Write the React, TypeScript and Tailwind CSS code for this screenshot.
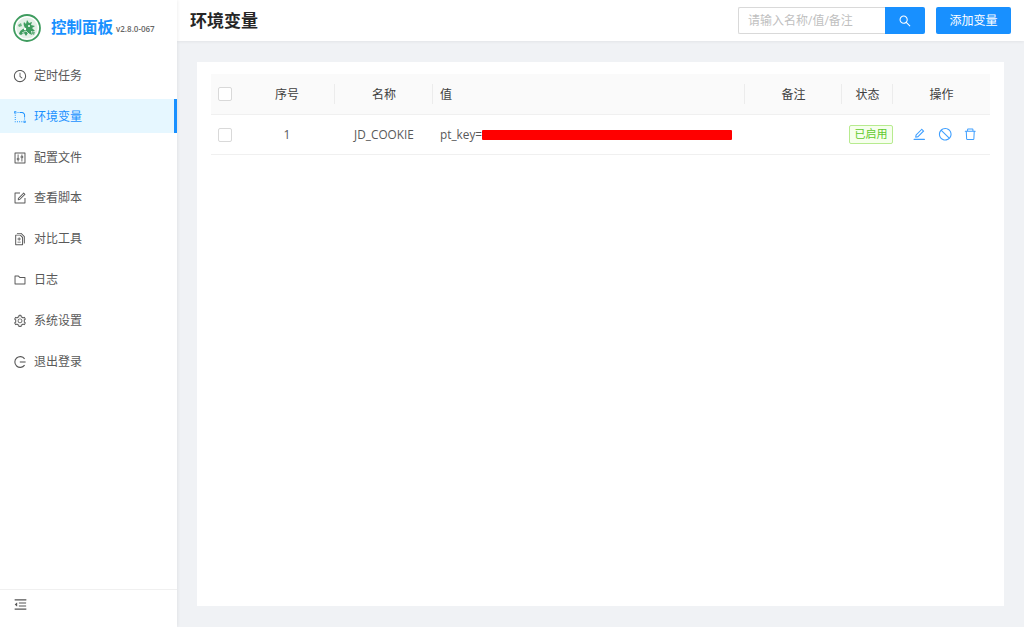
import {
  AiOutlineClockCircle,
  AiOutlineRadiusSetting,
  AiOutlineControl,
  AiOutlineForm,
  AiOutlineDiff,
  AiOutlineFolder,
  AiOutlineSetting,
  AiOutlineEdit,
  AiOutlineStop,
  AiOutlineDelete,
  AiOutlineSearch,
  AiOutlineMenuFold,
} from "react-icons/ai";

const font = "font-['Open_Sans','Noto_Sans_CJK_SC',sans-serif]";

const LogoutIcon = () => (
  <svg width="14" height="14" viewBox="0 0 14 14" fill="none" stroke="currentColor" strokeWidth="1.1">
    <path d="M11.6 3.8A5.4 5.4 0 1 0 11.6 10.2" />
    <path d="M6.8 7H12.6" />
  </svg>
);

const Logo = () => (
  <svg width="28" height="28" viewBox="0 0 28 28" fill="none">
    <circle cx="14" cy="14" r="13" stroke="#3f9c5f" strokeWidth="1.8" />
    <circle cx="14" cy="14" r="10.6" fill="#e4f0e7" />
    <path
      d="M6 20c1-4 4-5 6-6-1-2-2-4-1-6l2 2 1-4 2 3 3-1-1 3 4 1-3 2 3 3-4 0 1 4-4-2-2 3-2-3-3 2z"
      fill="#3f9c5f"
    />
    <path d="M5 11l3-2 1 3-3 1zM19 17l3 1-1 3-2-1z" fill="#6cb584" />
    <circle cx="12" cy="15" r="1.2" fill="#fff" />
    <circle cx="16" cy="12" r="1" fill="#fff" />
    <path d="M9 19l4-2 3 3" stroke="#fff" strokeWidth="0.7" />
  </svg>
);

const menu = [
  { label: "定时任务", icon: <AiOutlineClockCircle size={14} /> },
  { label: "环境变量", icon: <AiOutlineRadiusSetting size={14} />, active: true },
  { label: "配置文件", icon: <AiOutlineControl size={14} /> },
  { label: "查看脚本", icon: <AiOutlineForm size={14} /> },
  { label: "对比工具", icon: <AiOutlineDiff size={14} /> },
  { label: "日志", icon: <AiOutlineFolder size={14} /> },
  { label: "系统设置", icon: <AiOutlineSetting size={14} /> },
  { label: "退出登录", icon: <LogoutIcon /> },
];

const grid = "grid grid-cols-[28px_96px_98px_312px_97px_51px_97px]";

const Checkbox = () => (
  <span className="block h-[14px] w-[14px] rounded-[2px] border border-[#d9d9d9] bg-white" />
);

const HeadCell = ({ children, left }: { children?: React.ReactNode; left?: boolean }) => (
  <div className={`flex h-[40px] items-center pt-[2px] ${left ? "justify-start pl-[7px]" : "justify-center"}`}>
    {children}
  </div>
);

const Sep = () => <span className="absolute right-0 top-[10px] h-[20px] w-px bg-[#ececec]" />;

export default function App() {
  return (
    <div className={`flex h-[627px] w-[1024px] overflow-hidden bg-[#f0f2f5] ${font} text-[12px] text-[#595959]`}>
      <aside className="z-10 flex w-[177px] shrink-0 flex-col bg-white shadow-[1px_0_3px_rgba(0,0,0,0.06)]">
        <div className="flex h-[55px] items-center pl-[13px]">
          <Logo />
          <span className="ml-[10px] text-[15.5px] font-semibold text-[#1890ff]">控制面板</span>
          <span className="ml-[3px] mt-[3px] text-[8px] font-semibold text-[#666]">v2.8.0-067</span>
        </div>
        <nav className="flex flex-col gap-[6.8px] pt-[3px]">
          {menu.map((item) => (
            <div
              key={item.label}
              className={`flex h-[34px] items-center gap-[7px] pl-[13px] pt-[2px] ${
                item.active ? "border-r-[3px] border-[#1890ff] bg-[#e6f7ff] text-[#1890ff]" : ""
              }`}
            >
              {item.icon}
              <span>{item.label}</span>
            </div>
          ))}
        </nav>
        <div className="mt-auto flex h-[38px] items-start border-t border-[#f0f0f0] pl-[13px] pt-[7px] text-[#555]">
          <AiOutlineMenuFold size={15} />
        </div>
      </aside>

      <main className="flex min-w-0 flex-1 flex-col">
        <header className="flex h-[41px] items-center justify-between bg-white pl-[13px] pr-[13px] shadow-[0_1px_3px_rgba(0,0,0,0.06)]">
          <h1 className="text-[17px] font-semibold text-[#262626]">环境变量</h1>
          <div className="flex items-center gap-[11px]">
            <div className="flex h-[27px]">
              <div className="flex w-[147px] items-center rounded-l-[2px] border border-r-0 border-[#d9d9d9] bg-white pl-[9px] text-[#bfbfbf]">
                请输入名称/值/备注
              </div>
              <div className="flex w-[40px] items-center justify-center rounded-r-[2px] bg-[#1890ff] text-white">
                <AiOutlineSearch size={14} />
              </div>
            </div>
            <button className="flex h-[27px] w-[75px] items-center justify-center rounded-[2px] bg-[#1890ff] text-white">
              添加变量
            </button>
          </div>
        </header>

        <section className="mx-[20px] mb-[21px] mt-[21px] flex-1 bg-white px-[14px] pt-[12px]">
          <div className={`${grid} border-b border-[#f0f0f0] bg-[#fafafa] text-[#404040]`}>
            <div className="flex h-[40px] items-center pl-[7px]">
              <Checkbox />
            </div>
            <div className="relative"><HeadCell>序号</HeadCell><Sep /></div>
            <div className="relative"><HeadCell>名称</HeadCell><Sep /></div>
            <div className="relative"><HeadCell left>值</HeadCell><Sep /></div>
            <div className="relative"><HeadCell>备注</HeadCell><Sep /></div>
            <div className="relative"><HeadCell>状态</HeadCell><Sep /></div>
            <HeadCell>操作</HeadCell>
          </div>
          <div className={`${grid} h-[40px] items-center border-b border-[#f0f0f0]`}>
            <div className="pl-[7px]">
              <Checkbox />
            </div>
            <div className="text-center">1</div>
            <div className="text-center text-[11.8px]">JD_COOKIE</div>
            <div className="flex items-center pl-[7px]">
              <span className="text-[11.8px]">pt_key=</span>
              <span className="h-[10px] w-[250px] rounded-[1px] bg-[#ff0000]" />
            </div>
            <div />
            <div className="flex justify-start pl-[7px]">
              <span className="flex h-[19px] w-[44px] items-center justify-center rounded-[2px] border border-[#b7eb8f] bg-[#f6ffed] text-[11px] text-[#5ec92c]">
                已启用
              </span>
            </div>
            <div className="flex items-center justify-start gap-[11px] pl-[19px] text-[#3f9fff]">
              <AiOutlineEdit size={14.5} />
              <AiOutlineStop size={14.5} />
              <AiOutlineDelete size={14.5} />
            </div>
          </div>
        </section>
      </main>
    </div>
  );
}
